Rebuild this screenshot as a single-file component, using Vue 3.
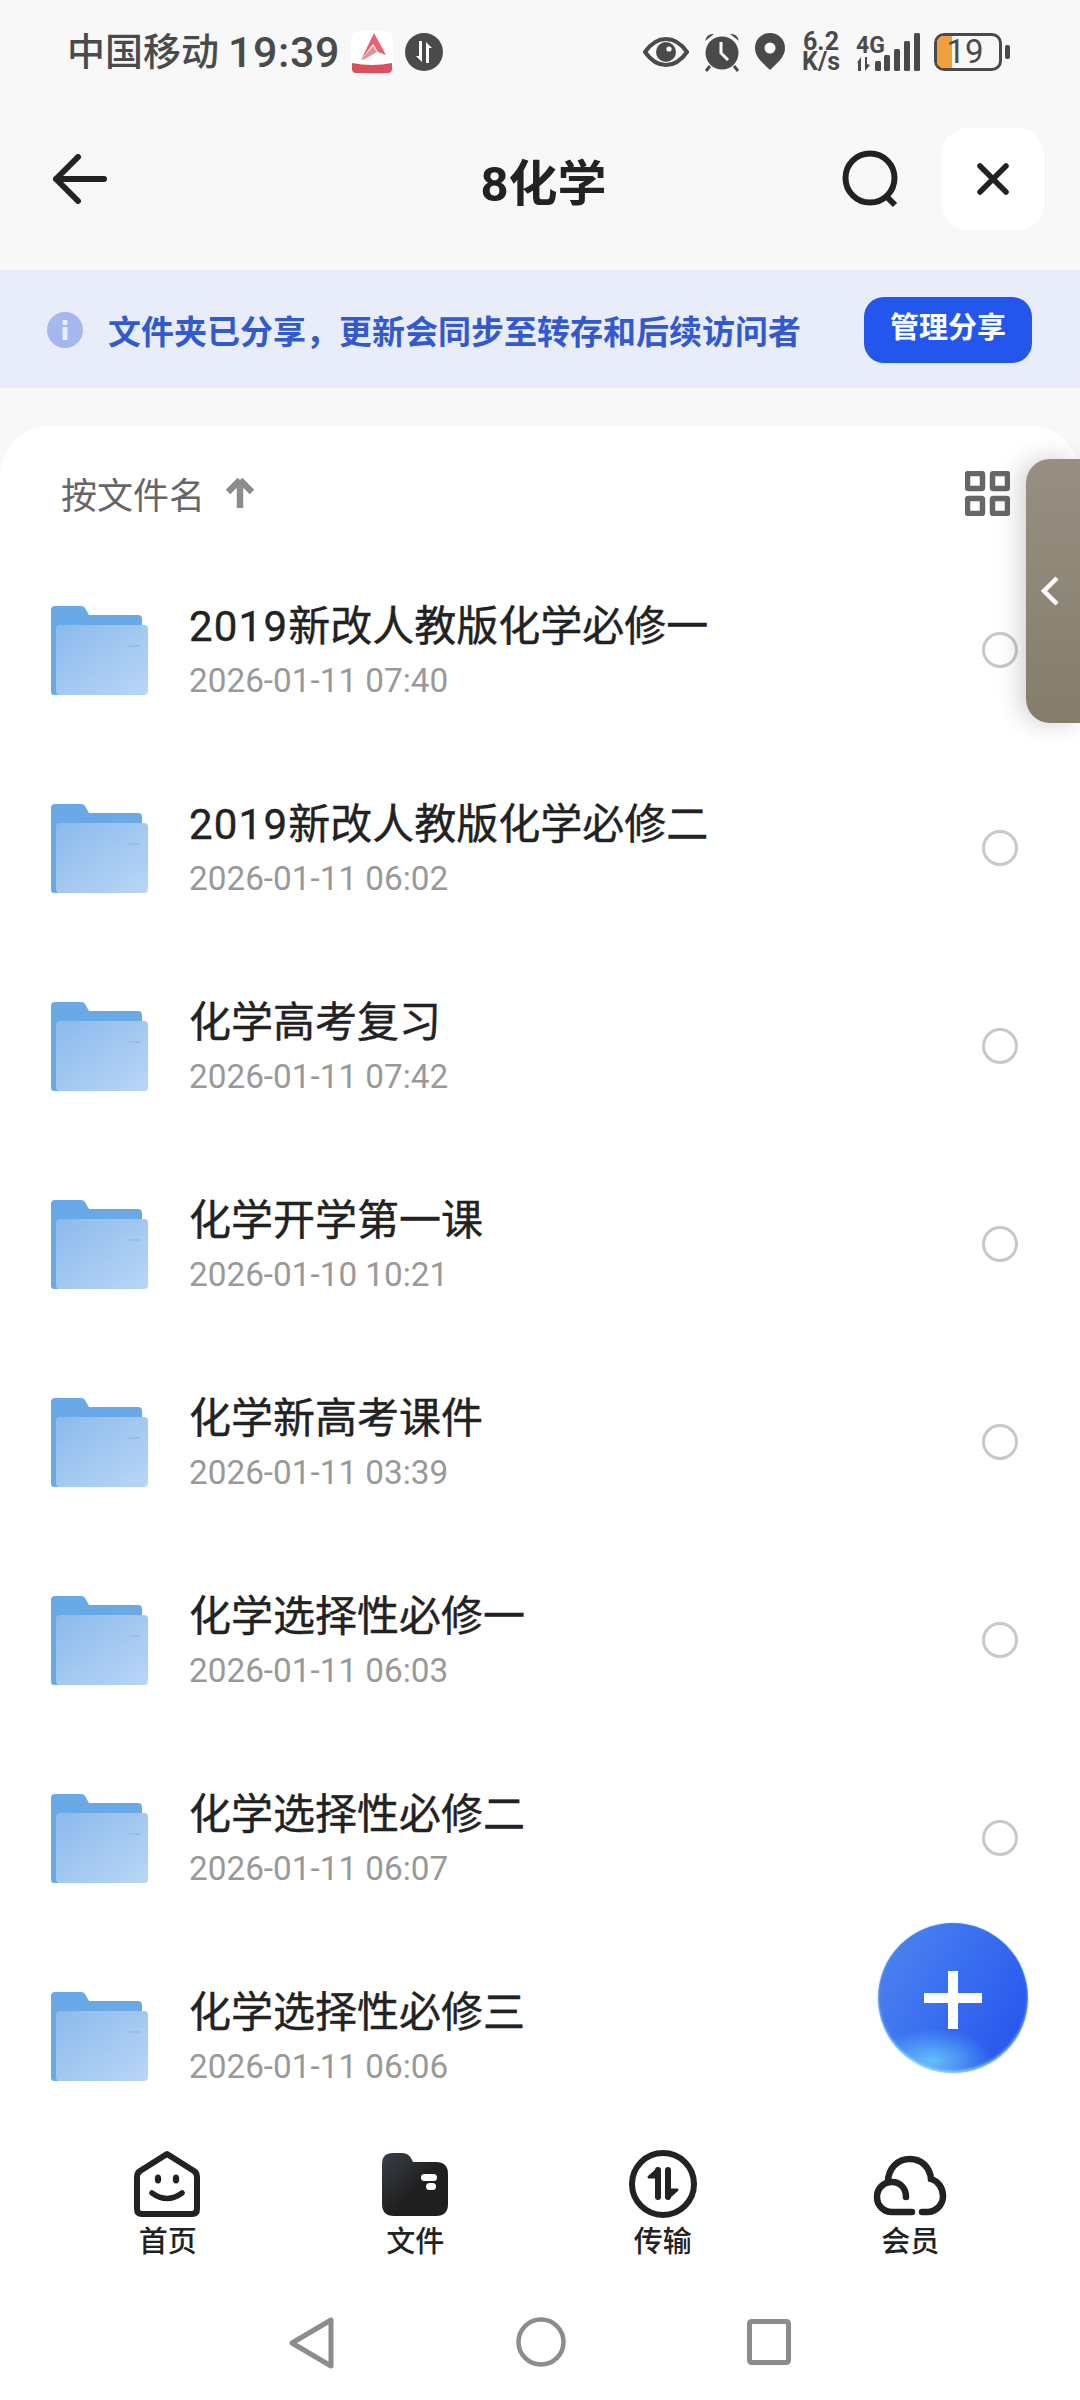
<script setup>
const rows = [
  { num: '2019', name: '新改人教版化学必修一', date: '2026-01-11 07:40' },
  { num: '2019', name: '新改人教版化学必修二', date: '2026-01-11 06:02' },
  { num: '', name: '化学高考复习', date: '2026-01-11 07:42' },
  { num: '', name: '化学开学第一课', date: '2026-01-10 10:21' },
  { num: '', name: '化学新高考课件', date: '2026-01-11 03:39' },
  { num: '', name: '化学选择性必修一', date: '2026-01-11 06:03' },
  { num: '', name: '化学选择性必修二', date: '2026-01-11 06:07' },
  { num: '', name: '化学选择性必修三', date: '2026-01-11 06:06', covered: true },
]
</script>

<template>
  <div class="phone">
    <div class="status">
      <div class="status-left">
        <span class="carrier">中国移动</span>
        <span class="time">19:39</span>
        <svg class="app-icon" width="42" height="42" viewBox="0 0 42 42">
          <rect x="0" y="0" width="42" height="42" rx="8" fill="#fff" />
          <path d="M23 2 L35 24 L27 21 L22 13 L10 29 Z" fill="#e8636f" />
          <path d="M10 29 L22 15 L26 21 L14 28 Z" fill="#dc9497" />
          <path d="M1 32 Q21 36 41 32 V38 Q41 42 37 42 H5 Q1 42 1 38 Z" fill="#d9505e" />
        </svg>
        <svg class="sync-icon" width="38" height="38" viewBox="0 0 38 38">
          <circle cx="19" cy="19" r="19" fill="#4a4a4a" />
          <path d="M17 8 V29 L11 23 H14 V8 Z M21 30 V9 L27 15 H24 V30 Z" fill="#fff" />
        </svg>
      </div>
      <div class="status-right">
        <svg width="46" height="32" viewBox="0 0 46 32">
          <path d="M2 16 C9 6 16 3 23 3 C30 3 37 6 44 16 C37 26 30 29 23 29 C16 29 9 26 2 16 Z" fill="none" stroke="#4a4a4a" stroke-width="4" />
          <circle cx="23" cy="16" r="10" fill="#4a4a4a" />
          <circle cx="26" cy="13" r="2.6" fill="#fff" />
        </svg>
        <svg width="38" height="40" viewBox="0 0 38 40">
          <circle cx="19" cy="21" r="16.5" fill="#4a4a4a" />
          <path d="M2 9 Q4 1 11 2 Z M36 9 Q34 1 27 2 Z" fill="#4a4a4a" />
          <path d="M7 34 L3 39 M31 34 L35 39" stroke="#4a4a4a" stroke-width="3" />
          <path d="M18 10 V21 L25 28" fill="none" stroke="#fff" stroke-width="3" />
        </svg>
        <svg width="30" height="38" viewBox="0 0 30 38">
          <path d="M15 37 C7 29 0 24 0 15 C0 6 7 0 15 0 C23 0 30 6 30 15 C30 24 23 29 15 37 Z" fill="#4a4a4a" />
          <circle cx="15" cy="15" r="5.5" fill="#fff" />
        </svg>
        <div class="speed"><span>6.2</span><span>K/s</span></div>
        <div class="signal">
          <div class="net">
            <span class="fourg">4G</span>
            <svg width="27" height="14" viewBox="0 0 27 14">
              <path d="M5 0 V14 H2 V5 L0 7 Z M9 0 V14 L14 8 L11 7 V0 Z" fill="#4a4a4a" />
              <rect x="19" y="4" width="6" height="10" rx="1.5" fill="#4a4a4a" />
            </svg>
          </div>
          <svg class="bars" width="36" height="38" viewBox="0 0 36 38">
            <rect x="0" y="22" width="6" height="16" rx="1.5" fill="#4a4a4a" />
            <rect x="10" y="16" width="6" height="22" rx="1.5" fill="#4a4a4a" />
            <rect x="20" y="8" width="6" height="30" rx="1.5" fill="#4a4a4a" />
            <rect x="30" y="0" width="6" height="38" rx="1.5" fill="#4a4a4a" />
          </svg>
        </div>
        <div class="battery">
          <div class="batt-body">
            <span class="batt-fill"></span>
            <span class="batt-num">19</span>
          </div>
          <span class="batt-tip"></span>
        </div>
      </div>
    </div>

    <div class="nav">
      <svg class="back" width="54" height="50" viewBox="0 0 54 50">
        <path d="M25 3 L3 25 L25 47 M3 25 H51" fill="none" stroke="#222" stroke-width="6" stroke-linecap="round" stroke-linejoin="round" />
      </svg>
      <div class="title">8化学</div>
      <svg class="search" width="58" height="58" viewBox="0 0 58 58">
        <circle cx="28" cy="28" r="24.5" fill="none" stroke="#222" stroke-width="6" />
        <path d="M44 46 L53 55" stroke="#222" stroke-width="6" />
      </svg>
      <div class="close">
        <svg width="32" height="32" viewBox="0 0 32 32">
          <path d="M3 3 L29 29 M29 3 L3 29" stroke="#222" stroke-width="5.5" stroke-linecap="round" />
        </svg>
      </div>
    </div>

    <div class="banner">
      <svg class="info" width="36" height="36" viewBox="0 0 36 36">
        <circle cx="18" cy="18" r="18" fill="#a5b8ee" />
        <rect x="15.5" y="8" width="5" height="5" rx="1" fill="#e9edf9" />
        <rect x="15.5" y="15" width="5" height="13" rx="1" fill="#e9edf9" />
      </svg>
      <span class="banner-text">文件夹已分享，更新会同步至转存和后续访问者</span>
      <span class="manage">管理分享</span>
    </div>

    <div class="card">
      <div class="sort">
        <span class="sort-label">按文件名</span>
        <svg class="sort-arrow" width="30" height="32" viewBox="0 0 30 32">
          <path d="M15 3 L27 15 M15 3 L3 15 M15 3 V31" fill="none" stroke="#8c8c8c" stroke-width="6.5" />
        </svg>
        <svg class="grid-icon" width="45" height="45" viewBox="0 0 45 45">
          <rect x="2.5" y="2.5" width="15" height="15" rx="1" fill="none" stroke="#666" stroke-width="5.5" />
          <rect x="27.5" y="2.5" width="15" height="15" rx="1" fill="none" stroke="#666" stroke-width="5.5" />
          <rect x="2.5" y="27.5" width="15" height="15" rx="1" fill="none" stroke="#666" stroke-width="5.5" />
          <rect x="27.5" y="27.5" width="15" height="15" rx="1" fill="none" stroke="#666" stroke-width="5.5" />
        </svg>
      </div>
      <div class="list">
        <div v-for="(r, i) in rows" :key="r.date + i" class="row">
          <svg class="folder" width="98" height="90" viewBox="0 0 98 90">
            <defs>
              <linearGradient :id="'f' + i" x1="0" y1="0" x2="1" y2="1">
                <stop offset="0" stop-color="#8cbaeb" />
                <stop offset="1" stop-color="#b9d6f7" />
              </linearGradient>
            </defs>
            <path d="M1 5 Q1 1 5 1 H31 Q34 1 35 3 L39 10 H88 Q92 10 92 14 V30 H8 V90 H4 Q1 90 1 86 Z" fill="#69a9e8" />
            <path d="M6 24 Q6 20 10 20 H94 Q98 20 98 24 V86 Q98 90 94 90 H10 Q6 90 6 86 Z" :fill="'url(#f' + i + ')'" />
            <rect x="79" y="40" width="11" height="2" fill="#9dbde0" />
          </svg>
          <div class="meta">
            <div class="name"><span class="num">{{ r.num }}</span>{{ r.name }}</div>
            <div class="date">{{ r.date }}</div>
          </div>
          <span class="radio" :class="{ covered: r.covered }"></span>
        </div>
      </div>
    </div>

    <div class="tabbar">
      <div class="tab">
        <svg width="68" height="68" viewBox="0 0 68 68">
          <path d="M33 4 L60 21 Q63 23 63 27 V59 Q63 64 58 64 H8 Q3 64 3 59 V27 Q3 23 6 21 Z" fill="none" stroke="#222" stroke-width="6" stroke-linejoin="round" />
          <ellipse cx="24" cy="29" rx="3.2" ry="4.5" fill="#222" />
          <ellipse cx="42" cy="29" rx="3.2" ry="4.5" fill="#222" />
          <path d="M18 43 Q33 54 48 43" fill="none" stroke="#222" stroke-width="5.5" stroke-linecap="round" />
        </svg>
        <span>首页</span>
      </div>
      <div class="tab">
        <svg width="68" height="68" viewBox="0 0 68 68">
          <defs>
            <linearGradient id="fileg" x1="0" y1="0" x2="1" y2="1">
              <stop offset="0" stop-color="#3a4048" />
              <stop offset="0.55" stop-color="#1f1f1f" />
              <stop offset="1" stop-color="#1f1f1f" />
            </linearGradient>
          </defs>
          <path d="M1 14 Q1 3 12 3 H21 Q28 3 31 10 L32 12 H55 Q67 12 67 24 V54 Q67 66 55 66 H13 Q1 66 1 54 Z" fill="url(#fileg)" />
          <rect x="40" y="24" width="16" height="7" rx="3.5" fill="#fff" />
          <rect x="45" y="33" width="10" height="7" rx="3.5" fill="#fff" />
        </svg>
        <span>文件</span>
      </div>
      <div class="tab">
        <svg width="70" height="68" viewBox="0 0 70 68">
          <circle cx="35" cy="34" r="31" fill="none" stroke="#222" stroke-width="6" />
          <path d="M30 20 V47" stroke="#222" stroke-width="6" stroke-linecap="round" />
          <path d="M30 19 L21 27 L30 27 Z" fill="#222" stroke="#222" stroke-width="3" stroke-linejoin="round" />
          <path d="M40 20 V47" stroke="#222" stroke-width="6" stroke-linecap="round" />
          <path d="M40 48 L49 40 L40 40 Z" fill="#222" stroke="#222" stroke-width="3" stroke-linejoin="round" />
        </svg>
        <span>传输</span>
      </div>
      <div class="tab">
        <svg width="74" height="68" viewBox="0 0 74 68">
          <path d="M39 62 H19 C10 62 4 55 4 47 C4 38 11 32 19 32 C27 32 33 38 33 47" fill="none" stroke="#222" stroke-width="6.5" stroke-linecap="round" />
          <path d="M15 32 C15 18 25 9 37 9 C48 9 57 17 58 29 C65 31 70 38 70 46 C70 55 63 62 54 62 H49" fill="none" stroke="#222" stroke-width="6.5" stroke-linecap="round" />
        </svg>
        <span>会员</span>
      </div>
    </div>

    <div class="sysnav">
      <svg width="46" height="52" viewBox="0 0 46 52">
        <path d="M42 3 V49 L3 26 Z" fill="none" stroke="#8c8c8c" stroke-width="5" stroke-linejoin="round" />
      </svg>
      <svg width="50" height="50" viewBox="0 0 50 50">
        <circle cx="25" cy="25" r="22.5" fill="none" stroke="#8c8c8c" stroke-width="4.5" />
      </svg>
      <svg class="sys-square" width="44" height="46" viewBox="0 0 44 46">
        <rect x="2.5" y="2.5" width="39" height="41" rx="2" fill="none" stroke="#8c8c8c" stroke-width="5" />
      </svg>
    </div>

    <div class="side-tab">
      <svg width="20" height="30" viewBox="0 0 20 30">
        <path d="M16 2 L3 15 L16 28" fill="none" stroke="#fff" stroke-width="4.5" />
      </svg>
    </div>

    <div class="fab">
      <span class="plus-h"></span>
      <span class="plus-v"></span>
    </div>
  </div>
</template>

<style>
html, body { margin: 0; padding: 0; background: #f8f8f8; }
</style>

<style scoped>
.phone {
  position: relative;
  width: 1080px;
  height: 2400px;
  overflow: hidden;
  display: flex;
  flex-direction: column;
  background: #f8f8f8;
  font-family: Roboto, "Noto Sans CJK SC", sans-serif;
  color: #222;
}
.status {
  height: 104px;
  flex: none;
  display: flex;
  align-items: center;
  justify-content: space-between;
  padding: 0 70px 0 67px;
  color: #4a4a4a;
}
.status-left { display: flex; align-items: center; }
.carrier { font-size: 38px; line-height: 44px; font-weight: 500; }
.time { font-size: 43px; line-height: 44px; margin-left: 9px; letter-spacing: 0.6px; font-weight: 500; }
.app-icon { margin-left: 11px; }
.sync-icon { margin-left: 12px; }
.status-right { display: flex; align-items: center; gap: 14px; }
.speed {
  display: flex;
  flex-direction: column;
  align-items: center;
  font-size: 25px;
  line-height: 20px;
  font-weight: 700;
  width: 40px;
  margin-left: 2px;
}
.signal { display: flex; align-items: flex-end; margin-left: 1px; }
.net { display: flex; flex-direction: column; width: 27px; }
.fourg { font-size: 23px; line-height: 22px; font-weight: 700; }
.bars { margin-left: 1px; }
.battery { display: flex; align-items: center; gap: 3px; }
.batt-body {
  position: relative;
  width: 68px;
  height: 38px;
  box-sizing: border-box;
  border: 3.5px solid #4a4a4a;
  border-radius: 10px;
  display: flex;
  align-items: center;
  justify-content: center;
  overflow: hidden;
}
.batt-fill { position: absolute; left: 0; top: 0; bottom: 0; width: 15px; background: #f0a03c; }
.batt-num { position: relative; font-size: 33px; line-height: 32px; margin-left: -6px; color: #4a4a4a; }
.batt-tip { width: 5px; height: 14px; background: #4a4a4a; border-radius: 2px; }

.nav {
  height: 150px;
  flex: none;
  margin-bottom: 16px;
  display: flex;
  align-items: center;
  padding: 0 36px 0 53px;
}
.title {
  flex: 1;
  text-align: center;
  font-size: 49px;
  font-weight: 700;
  color: #222;
  padding-left: 138px;
}
.search { margin-right: 42px; }
.close {
  width: 102px;
  height: 102px;
  background: #fff;
  border-radius: 26px;
  display: flex;
  align-items: center;
  justify-content: center;
}
.banner {
  height: 118px;
  flex: none;
  box-sizing: border-box;
  background: #e9edf9;
  display: flex;
  align-items: center;
  padding: 2px 48px 0 47px;
}
.info { flex: none; }
.banner-text {
  flex: 1;
  margin-left: 25px;
  font-size: 33px;
  font-weight: 700;
  color: #3359cf;
  white-space: nowrap;
}
.manage {
  flex: none;
  width: 168px;
  height: 66px;
  background: #2256ec;
  border-radius: 20px;
  color: #fff;
  font-size: 29px;
  font-weight: 700;
  line-height: 62px;
  text-align: center;
}
.card {
  flex: 1;
  min-height: 0;
  margin-top: 38px;
  background: #fff;
  border-radius: 50px 50px 0 0;
  overflow: hidden;
}
.sort {
  display: flex;
  align-items: center;
  height: 116px;
  padding: 9px 70px 0 61px;
}
.sort-label { font-size: 36px; color: #666; }
.sort-arrow { margin-left: 20px; }
.grid-icon { margin-left: auto; }
.row {
  height: 198px;
  box-sizing: border-box;
  display: flex;
  align-items: center;
  padding: 0 62px 0 50px;
}
.meta { flex: 1; margin-left: 41px; }
.name { font-size: 42px; line-height: 60px; color: #222; -webkit-text-stroke: 0.4px #222; }
.num { letter-spacing: 1.2px; }
.date { font-size: 33.3px; line-height: 44px; color: #999; margin-top: 2px; }
.radio {
  width: 36px;
  height: 36px;
  box-sizing: border-box;
  border: 3.5px solid #c8c8c8;
  border-radius: 50%;
}
.radio.covered { visibility: hidden; }
.tabbar {
  flex: none;
  height: 188px;
  background: #fff;
  display: grid;
  grid-template-columns: repeat(4, 247.5px);
  padding: 54px 0 0 44px;
  box-sizing: border-box;
}
.tab {
  display: flex;
  flex-direction: column;
  align-items: center;
}
.tab span {
  font-size: 29px;
  line-height: 40px;
  font-weight: 500;
  color: #222;
  margin-top: 4px;
}
.sysnav {
  flex: none;
  height: 116px;
  background: #fff;
  display: flex;
  align-items: flex-start;
  justify-content: center;
  gap: 181px;
  padding-top: 33px;
  box-sizing: border-box;
}
.sys-square { margin-top: 2px; }
.side-tab {
  position: absolute;
  left: 1026px;
  top: 459px;
  width: 54px;
  height: 264px;
  border-radius: 24px 0 0 24px;
  background: linear-gradient(180deg, #978f82 0%, #857d6a 100%);
  box-shadow: -6px 0 24px rgba(0, 0, 0, 0.18);
  display: flex;
  align-items: center;
  padding-left: 15px;
  box-sizing: border-box;
}
.fab {
  position: absolute;
  left: 878px;
  top: 1923px;
  width: 150px;
  height: 150px;
  border-radius: 50%;
  background:
    radial-gradient(ellipse 60px 32px at 36% 92%, rgba(105, 200, 250, 0.9), rgba(105, 200, 250, 0)),
    linear-gradient(120deg, #4f87ee 0%, #3a6ff0 45%, #2450ec 100%);
  box-shadow: 0 0 2px #8fd6ff, inset 0 -2px 3px rgba(160, 225, 255, 0.8);
}
.plus-h, .plus-v { position: absolute; background: #fff; }
.plus-h { left: 46px; top: 70px; width: 58px; height: 10px; }
.plus-v { left: 70px; top: 48px; width: 10px; height: 58px; }
</style>
